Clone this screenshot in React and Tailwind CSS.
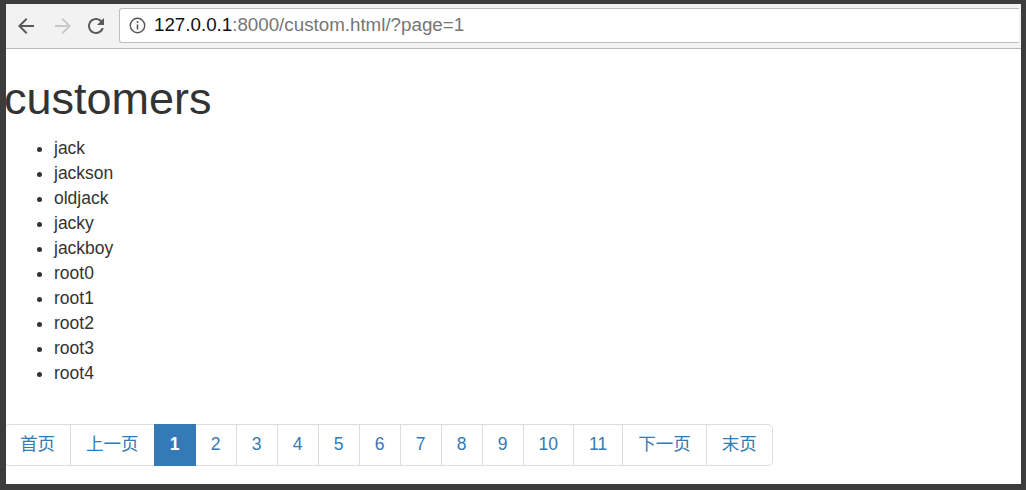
import React from "react";

const PAGES = ["1", "2", "3", "4", "5", "6", "7", "8", "9", "10", "11"];
const CUSTOMERS = ["jack", "jackson", "oldjack", "jacky", "jackboy", "root0", "root1", "root2", "root3", "root4"];

const FONT = { fontFamily: '"Liberation Sans", Arial, "Noto Sans CJK SC", sans-serif' };

function BackIcon({ color }) {
  return (
    <svg width="24" height="24" viewBox="0 0 24 24" fill={color}>
      <path d="M20 11H7.83l5.59-5.59L12 4l-8 8 8 8 1.41-1.41L7.83 13H20v-2z" />
    </svg>
  );
}

function ForwardIcon({ color }) {
  return (
    <svg width="24" height="24" viewBox="0 0 24 24" fill={color}>
      <path d="M4 11h12.17l-5.59-5.59L12 4l8 8-8 8-1.41-1.41L16.17 13H4v-2z" />
    </svg>
  );
}

function ReloadIcon({ color }) {
  return (
    <svg width="24" height="24" viewBox="0 0 24 24" fill={color}>
      <path d="M17.65 6.35C16.2 4.9 14.21 4 12 4c-4.42 0-7.99 3.58-7.99 8s3.57 8 7.99 8c3.73 0 6.84-2.55 7.730-6h-2.08c-.82 2.33-3.04 4-5.65 4-3.31 0-6-2.69-6-6s2.69-6 6-6c1.66 0 3.14.69 4.22 1.78L13 11h7V4l-2.35 2.35z" />
    </svg>
  );
}

function InfoIcon() {
  return (
    <svg width="17" height="17" viewBox="0 0 17 17" fill="none" stroke="#555">
      <circle cx="8.5" cy="8.5" r="7.2" strokeWidth="1.4" />
      <line x1="8.5" y1="7.5" x2="8.5" y2="12.5" strokeWidth="1.6" />
      <circle cx="8.5" cy="5" r="1" fill="#555" stroke="none" />
    </svg>
  );
}

function Toolbar() {
  return (
    <div className="h-[45px] shrink-0 border-b border-[#b9b9b9] bg-[#f2f2f2] pt-[4px]">
      <div className="flex h-[35px] items-center">
        <div className="ml-[8px]">
          <BackIcon color="#5a5a5a" />
        </div>
        <div className="ml-[13px]">
          <ForwardIcon color="#c9c9c9" />
        </div>
        <div className="ml-[9px]">
          <ReloadIcon color="#5a5a5a" />
        </div>
        <div className="ml-[11px] mr-[2px] flex h-[35px] flex-1 items-center rounded-l-[3px] border border-r-0 border-[#bdbdbd] bg-white pl-[9px]">
          <InfoIcon />
          <span className="ml-[8px] text-[18.75px] leading-none" style={FONT}>
            <span className="text-[#111]">127.0.0.1</span>
            <span className="text-[#767676]">:8000/custom.html/?page=1</span>
          </span>
        </div>
      </div>
    </div>
  );
}

function Pagination() {
  const items = ["首页", "上一页", ...PAGES, "下一页", "末页"];
  return (
    <div className="flex pt-[25px]">
      {items.map((label, i) => {
        const active = label === "1";
        const first = i === 0;
        const last = i === items.length - 1;
        const single = label.length === 1 && /\d/.test(label);
        return (
          <a
            key={label}
            className={
              "relative block border py-[7.5px] text-center text-[17.5px] leading-[25px] " +
              (single ? "w-[42px] " : "px-[15px] ") +
              (first ? "rounded-l-[5px] " : "-ml-px ") +
              (last ? "rounded-r-[5px] " : "") +
              (active
                ? "z-10 border-[#337ab7] bg-[#337ab7] font-bold text-white"
                : "border-[#dddddd] bg-white text-[#337ab7]")
            }
          >
            {label}
          </a>
        );
      })}
    </div>
  );
}

export default function App() {
  return (
    <div className="h-[490px] w-[1026px] bg-[#3c3c3c] pb-[6px] pl-[6px] pr-[5px] pt-[4px]">
      <div className="flex h-full flex-col overflow-hidden bg-white">
        <Toolbar />
        <div className="-ml-[2px] text-[#333]" style={FONT}>
          <h1 className="mb-[12.5px] mt-[25px] text-[45px] font-medium leading-[1.1]">customers</h1>
          <ul className="mb-[12.5px] list-disc pl-[50px]">
            {CUSTOMERS.map((name) => (
              <li key={name} className="text-[17.5px] leading-[25px]">
                {name}
              </li>
            ))}
          </ul>
          <Pagination />
        </div>
      </div>
    </div>
  );
}
